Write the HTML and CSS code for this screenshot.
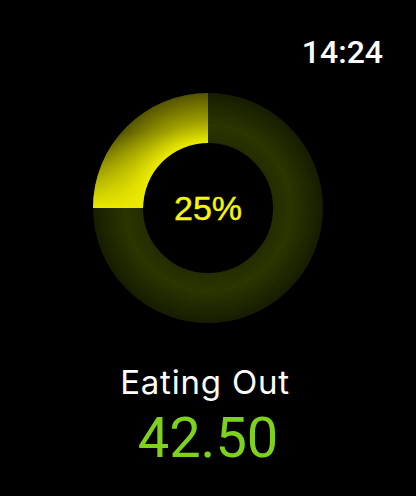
FILE: index.html
```html
<!DOCTYPE html>
<html>
<head>
<meta charset="utf-8">
<link rel="stylesheet" href="styles.css">
</head>
<body>
<div class="screen">
  <div class="time">14:24</div>
  <div class="donut">
    <svg width="230" height="230" viewBox="0 0 230 230">
      <defs>
        <radialGradient id="track" gradientUnits="userSpaceOnUse" cx="115" cy="115" r="115">
          <stop offset="0.565" stop-color="#232c00"/>
          <stop offset="0.72" stop-color="#2a3500"/>
          <stop offset="1" stop-color="#161c00"/>
        </radialGradient>
        <radialGradient id="seg" gradientUnits="userSpaceOnUse" cx="115" cy="115" r="115">
          <stop offset="0.565" stop-color="#ecec00"/>
          <stop offset="0.75" stop-color="#a0a000"/>
          <stop offset="1" stop-color="#545400"/>
        </radialGradient>
        <linearGradient id="segglow" gradientUnits="userSpaceOnUse" x1="0" y1="115" x2="0" y2="40">
          <stop offset="0" stop-color="#eaea00" stop-opacity="1"/>
          <stop offset="1" stop-color="#eaea00" stop-opacity="0"/>
        </linearGradient>
      </defs>
      <circle cx="115" cy="115" r="90" fill="none" stroke="url(#track)" stroke-width="50"/>
      <path d="M115 0 A115 115 0 0 0 0 115 L50 115 A65 65 0 0 1 115 50 Z" fill="url(#seg)"/>
      <path d="M115 0 A115 115 0 0 0 0 115 L50 115 A65 65 0 0 1 115 50 Z" fill="url(#segglow)"/>
    </svg>
    <div class="pct">25%</div>
  </div>
  <div class="label">Eating Out</div>
  <div class="amount">42.50</div>
</div>
</body>
</html>
```
FILE: styles.css
```css
html, body {
  margin: 0;
  padding: 0;
  background: #000;
}
.screen {
  width: 416px;
  height: 496px;
  display: flex;
  flex-direction: column;
  align-items: center;
  overflow: hidden;
}
.time {
  align-self: stretch;
  text-align: right;
  padding-right: 33px;
  margin-top: 36px;
  font-family: Roboto, sans-serif;
  font-weight: 500;
  font-size: 32px;
  line-height: 32px;
  color: #fff;
}
.donut {
  position: relative;
  width: 230px;
  height: 230px;
  margin-top: 25px;
}
.donut svg {
  display: block;
}
.pct {
  position: absolute;
  left: 0;
  top: 0;
  width: 230px;
  height: 230px;
  display: flex;
  align-items: center;
  justify-content: center;
  font-family: "Liberation Sans", Arial, sans-serif;
  font-size: 34px;
  -webkit-text-stroke: 0.4px #f7f700;
  color: #f7f700;
}
.label {
  margin-top: 39px;
  margin-right: 6px;
  font-family: Inter, sans-serif;
  font-size: 33px;
  line-height: 40px;
  letter-spacing: 0.8px;
  color: #fff;
}
.amount {
  margin-top: 8px;
  font-family: Roboto, sans-serif;
  font-size: 56px;
  line-height: 56px;
  color: #7ed11c;
}
```
